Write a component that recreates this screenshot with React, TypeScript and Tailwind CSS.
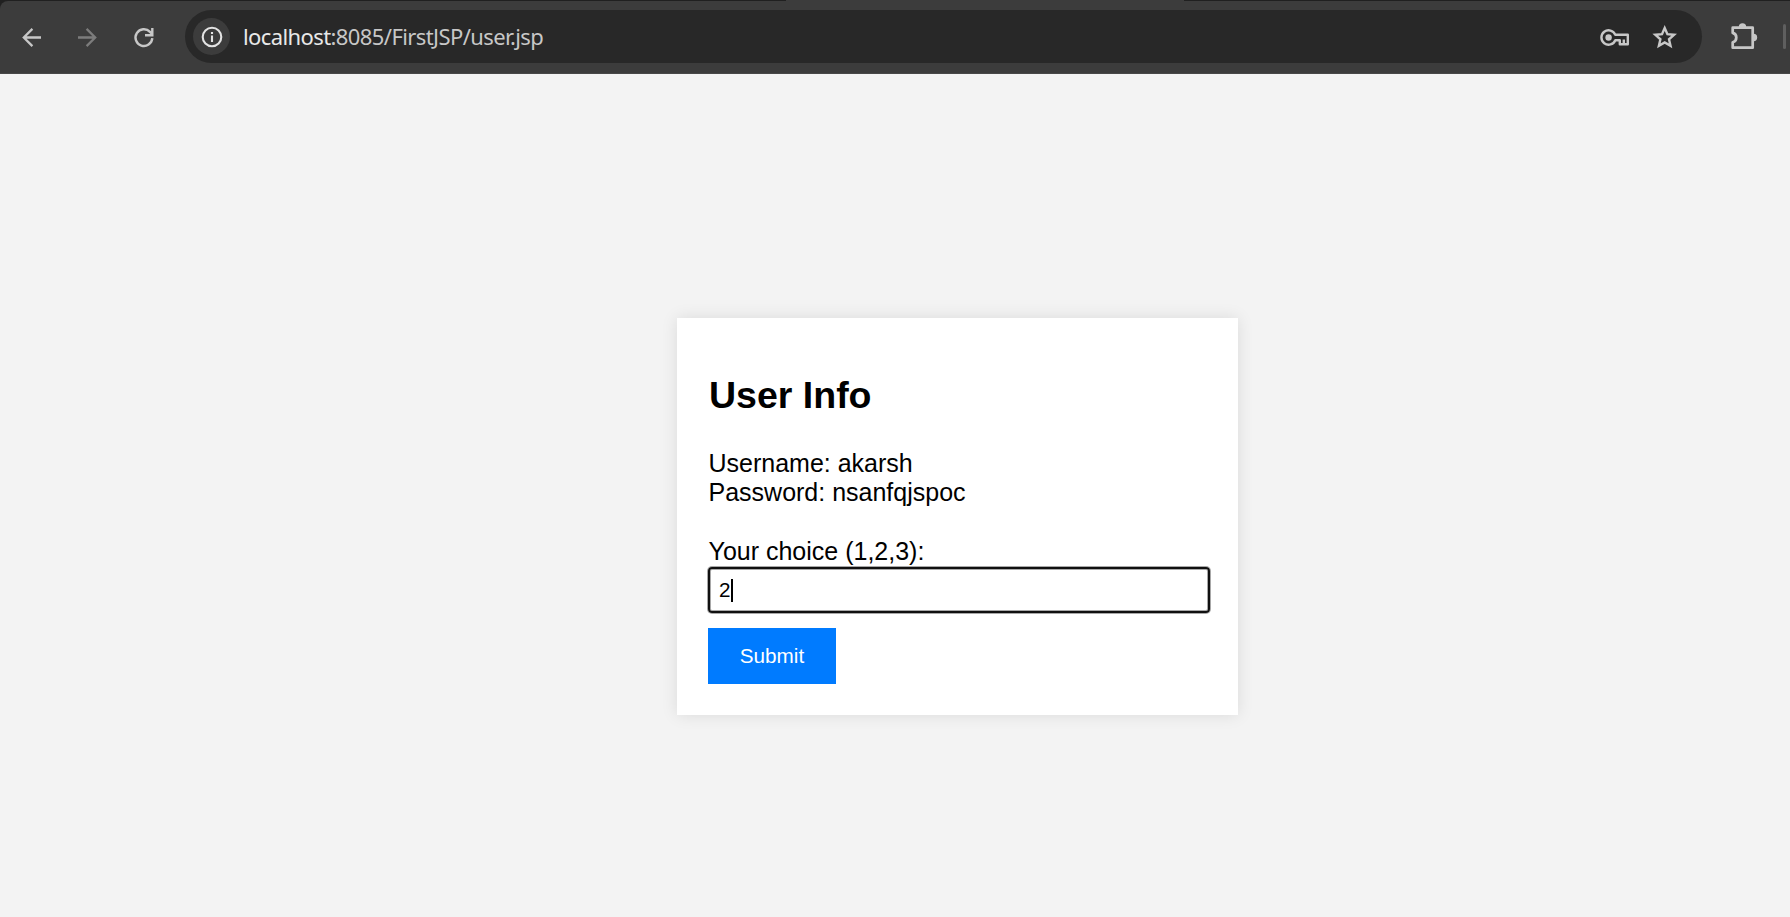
function Toolbar() {
  return (
    <header className="flex h-[74px] flex-col bg-[#202020]">
      <div className="flex h-px pl-[786px]">
        <div className="h-px w-[398px] bg-[#3c3c3c]" />
      </div>
      <div className="flex h-[73px] items-center rounded-tl-[8px] border-b border-[#484848] bg-[#3c3c3c] pb-[1px]">
        <svg className="ml-[16px] h-8 w-8 shrink-0" viewBox="16 20 32 32" fill="none" stroke="#c7c7c7" strokeWidth="2.3">
          <path d="M41 36.5H24M32.4 27.9L23.8 36.5L32.4 45.1" />
        </svg>
        <svg className="ml-[24px] h-8 w-8 shrink-0" viewBox="72 20 32 32" fill="none" stroke="#7c7c7c" strokeWidth="2.3">
          <path d="M78 36.5H95M86.6 27.9L95.2 36.5L86.6 45.1" />
        </svg>
        <svg className="ml-[24px] h-8 w-8 shrink-0" viewBox="128 20 32 32" fill="none" stroke="#c7c7c7" strokeWidth="2.4">
          <path d="M152.3 37.2A8.4 8.4 0 1 1 150 30.8L152.3 33.2M152.3 27V34.2H145" />
        </svg>
        <div className="ml-[25px] flex h-[53px] w-[1517px] shrink-0 items-center rounded-full bg-[#282828] pl-[8px]">
          <div className="flex h-[37px] w-[37px] items-center justify-center rounded-full bg-[#3c3c3c]">
            <svg className="h-[22px] w-[22px]" viewBox="0 0 22 22" fill="none" stroke="#e3e3e3" strokeWidth="2.1">
              <circle cx="11" cy="11" r="9.3" />
              <path d="M11 9.6V16M11 6V8" />
            </svg>
          </div>
          <div className="ml-[13px] whitespace-nowrap pb-[1px] font-['Noto_Sans',sans-serif] text-[22px] leading-[30px] tracking-[-0.6px] text-[#c7c7c7]">
            <span className="text-[#e8e8e8]">localhost</span>:8085/FirstJSP/user.jsp
          </div>
          <svg className="ml-auto h-8 w-8 shrink-0" viewBox="1599 20 32 32" fill="none" stroke="#c7c7c7" strokeWidth="2.4">
            <path d="M1615.3 33.8A7.2 7.2 0 1 0 1615.3 39.2H1619.8V43.2H1627.8V33.8Z" strokeLinejoin="round" />
            <path d="M1623.8 38.5V42" />
            <circle cx="1608.6" cy="36.5" r="3.2" fill="#c7c7c7" stroke="none" />
          </svg>
          <svg className="ml-[18px] mr-[21px] h-8 w-8 shrink-0" viewBox="1649 20 32 32" fill="none" stroke="#c7c7c7" strokeWidth="2.4">
            <path d="M1664.7 27L1667.4 33.2L1674.1 33.8L1669 38.3L1670.5 44.8L1664.7 41.4L1658.9 44.8L1660.4 38.3L1655.3 33.8L1662 33.2Z" />
          </svg>
        </div>
        <svg className="ml-[26px] h-8 w-8 shrink-0" viewBox="1728 20 32 32" fill="none" stroke="#c7c7c7" strokeWidth="2.7">
          <path d="M1732.7 26.7H1752.7V46.7H1732.7V41.2A4.8 4.8 0 0 0 1732.7 31.9Z" strokeLinejoin="round" />
          <path d="M1738.8 26A3.7 3.7 0 0 1 1746.2 26ZM1753.5 32.8A3.7 3.7 0 0 1 1753.5 40.2Z" fill="#c7c7c7" stroke="none" />
        </svg>
        <div className="ml-[23px] h-[25px] w-[3px] shrink-0 rounded-full bg-[#5f5f5f]" />
      </div>
    </header>
  );
}

export default function App() {
  return (
    <div className="flex h-[917px] w-[1790px] flex-col overflow-hidden bg-[#f3f3f3] font-['Liberation_Sans',sans-serif] text-black">
      <Toolbar />
      <main className="flex flex-1 items-start pl-[677px] pt-[244px]">
        <form className="h-[397px] w-[561px] bg-white pl-[31px] pr-[27px] shadow-[0_0_15.5px_rgba(0,0,0,0.1)]" onSubmit={(e) => e.preventDefault()}>
          <h2 className="pl-px pt-[56px] text-[37.5px] font-bold leading-[43px]">User Info</h2>
          <div className="mt-[32px] pl-[0.5px] text-[25px] leading-[29px]">
            <p>Username: akarsh</p>
            <p>Password: nsanfqjspoc</p>
            <p className="mt-[30px]">Your choice (1,2,3):</p>
          </div>
          <div className="mt-px flex h-[46px] w-[502px] items-center rounded-[4px] border-[2px] border-[#101010] pl-[9px] shadow-[0_0_0_1px_#a8a8a8,inset_0_0_0_1px_#a8a8a8]">
            <span className="text-[20.7px] leading-6">2</span>
            <span className="h-[23px] w-[2px] bg-black" />
          </div>
          <button className="mt-[15px] block h-[56px] w-[128px] bg-[#007bff] text-[20.7px] text-white">Submit</button>
        </form>
      </main>
    </div>
  );
}
